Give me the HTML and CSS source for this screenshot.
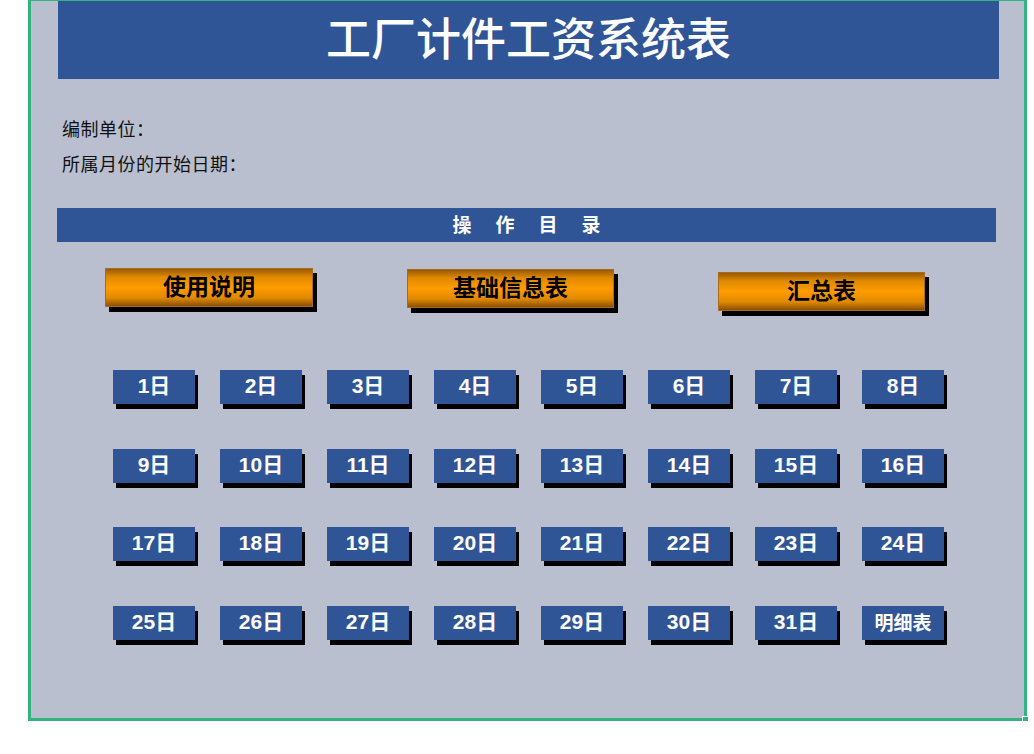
FILE: index.html
```html
<!DOCTYPE html>
<html lang="zh">
<head>
<meta charset="utf-8">
<title>工厂计件工资系统表</title>
<link rel="stylesheet" href="styles.css">
</head>
<body>
<div class="sheet">
  <div class="title">工厂计件工资系统表</div>
  <div class="info">
    <div class="line">编制单位：</div>
    <div class="line">所属月份的开始日期：</div>
  </div>
  <div class="section">操作目录</div>
  <div class="menu">
    <div class="obtn b1">使用说明</div>
    <div class="obtn b2">基础信息表</div>
    <div class="obtn b3">汇总表</div>
  </div>
  <div class="days">
    <div class="day">1日</div><div class="day">2日</div><div class="day">3日</div><div class="day">4日</div>
    <div class="day">5日</div><div class="day">6日</div><div class="day">7日</div><div class="day">8日</div>
    <div class="day">9日</div><div class="day">10日</div><div class="day">11日</div><div class="day">12日</div>
    <div class="day">13日</div><div class="day">14日</div><div class="day">15日</div><div class="day">16日</div>
    <div class="day">17日</div><div class="day">18日</div><div class="day">19日</div><div class="day">20日</div>
    <div class="day">21日</div><div class="day">22日</div><div class="day">23日</div><div class="day">24日</div>
    <div class="day">25日</div><div class="day">26日</div><div class="day">27日</div><div class="day">28日</div>
    <div class="day">29日</div><div class="day">30日</div><div class="day">31日</div><div class="day detail">明细表</div>
  </div>
  <div class="handle"></div>
</div>
</body>
</html>
```

FILE: styles.css
```css
html, body {
  margin: 0;
  padding: 0;
  background: #ffffff;
}
body {
  font-family: "Noto Sans CJK SC", "Noto Sans", sans-serif;
}
.sheet {
  position: relative;
  box-sizing: border-box;
  margin-left: 28px;
  width: 999px;
  height: 721px;
  background: #b9bfcf;
  border: 3px solid #32b47f;
  border-top-width: 1px;
}
.handle {
  position: absolute;
  right: -5px;
  bottom: -5px;
  width: 5px;
  height: 5px;
  background: #32b47f;
  border: 1px solid #ffffff;
}
.title {
  margin-left: 27px;
  width: 941px;
  height: 78px;
  background: #2f5597;
  color: #ffffff;
  font-size: 45px;
  font-weight: 500;
  text-align: center;
  line-height: 72px;
}
.info {
  margin-top: 32px;
  padding-left: 31px;
  font-size: 18px;
  line-height: 35px;
  letter-spacing: 0.5px;
  color: #111111;
}
.section {
  margin-top: 27px;
  margin-left: 26px;
  width: 939px;
  height: 34px;
  background: #2f5597;
  color: #ffffff;
  font-size: 19px;
  font-weight: 700;
  text-align: center;
  line-height: 32px;
  letter-spacing: 24px;
  text-indent: 24px;
}
.menu {
  display: flex;
  align-items: flex-start;
  margin-top: 26px;
  height: 49px;
}
.obtn {
  box-sizing: border-box;
  height: 39px;
  background: linear-gradient(to bottom, #9a5a00 0%, #e08a00 22%, #ff9c00 50%, #e08a00 78%, #8c5000 100%);
  border: 1px solid #a86a20;
  box-shadow: 4px 5px 0 #000000;
  color: #000000;
  font-size: 23px;
  font-weight: 700;
  text-align: center;
  line-height: 33px;
}
.b1 {
  margin-left: 74px;
  width: 208px;
}
.b2 {
  margin-left: 94px;
  margin-top: 1px;
  width: 207px;
}
.b3 {
  margin-left: 104px;
  margin-top: 4px;
  width: 207px;
}
.days {
  display: grid;
  grid-template-columns: repeat(8, 82px);
  grid-auto-rows: 34px;
  column-gap: 25px;
  row-gap: 44.7px;
  margin-top: 53px;
  padding-left: 82px;
}
.day {
  background: #2f5597;
  box-shadow: 3px 5px 0 #000000;
  color: #ffffff;
  font-family: "Liberation Sans", "Noto Sans CJK SC", sans-serif;
  font-size: 21px;
  font-weight: 700;
  text-align: center;
  line-height: 32px;
}
.detail {
  font-family: "Noto Sans CJK SC", sans-serif;
  font-size: 19px;
}
```
